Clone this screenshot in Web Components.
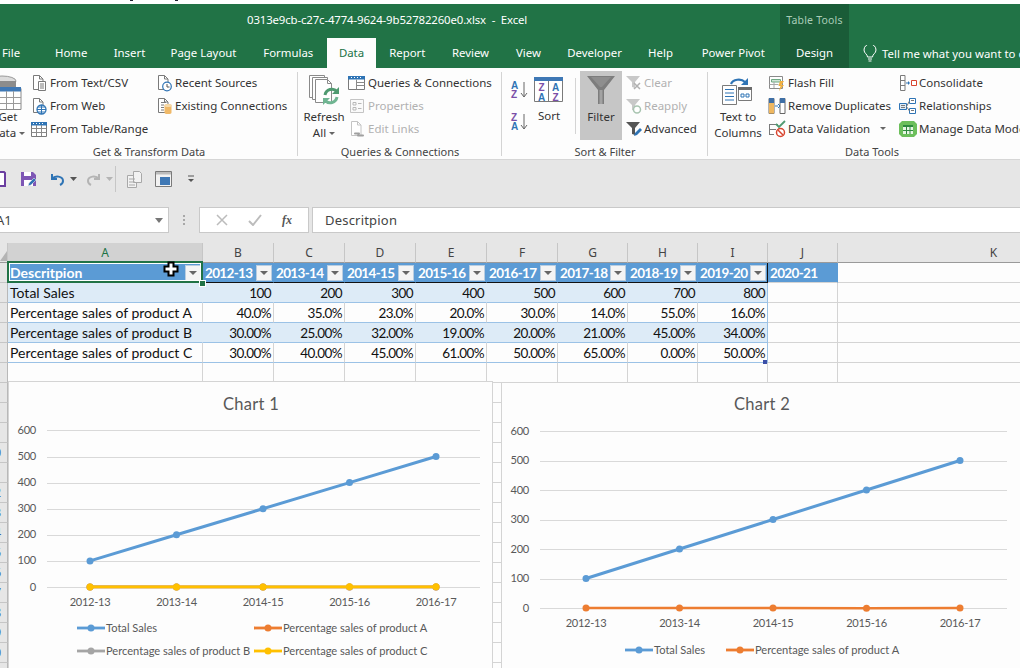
<!DOCTYPE html>
<html>
<head>
<meta charset="utf-8">
<title>Excel</title>
<style>
  html, body { margin: 0; padding: 0; width: 1020px; height: 668px; overflow: hidden; background: #e6e6e6; }
  body { display: flex; flex-direction: column; font-family: 'Noto Sans', sans-serif; }
</style>
</head>
<body>
<xl-titlebar></xl-titlebar>
<xl-ribbon></xl-ribbon>
<xl-qat></xl-qat>
<xl-formula></xl-formula>
<xl-sheet>
  <xl-chart config="one"></xl-chart>
  <xl-chart config="two"></xl-chart>
</xl-sheet>

<script>
const UI_FONT = "'Noto Sans', 'Open Sans', sans-serif";
const CELL_FONT = "Lato, 'Open Sans', sans-serif";

// doc outline used by most of the small ribbon icons
const docOutline = (c = '#7a7a7a') => `<path d="M3.5 1.5h6l3.5 3.5v10.500h-9.500z" fill="#fff" stroke="${c}"/><path d="M9.500 1.500v3.500h3.500" fill="none" stroke="${c}"/>`;
const svg = (w, h, body) => `<svg width="${w}" height="${h}" viewBox="0 0 ${w} ${h}" xmlns="http://www.w3.org/2000/svg">${body}</svg>`;

const ICONS = {
  csv: svg(18, 18, docOutline() + '<path d="M8.500 7.500h7v9h-7z" fill="#fff" stroke="#7a7a7a"/><path d="M10 10h4M10 12h4M10 14h4" stroke="#7a7a7a"/>'),
  web: svg(18, 18, docOutline() + '<circle cx="11.500" cy="12.500" r="4.500" fill="#fff" stroke="#2f74b5" stroke-width="1.300"/><path d="M7 12.500h9M11.500 8v9M8 10h7M8 15h7" stroke="#2f74b5"/>'),
  table: svg(18, 18, '<path d="M1.500 3.500h15v13h-15z" fill="#fff" stroke="#7a7a7a"/><path d="M1 2h16v3.500H1z" fill="#2f74b5"/><path d="M3 3.500h1M6 3.500h1M9 3.500h1M12 3.500h1" stroke="#fff"/><path d="M1.500 8.500h15M1.500 12.500h15M6.500 5v11M11.500 5v11" stroke="#8a8a8a"/>'),
  recent: svg(18, 18, docOutline() + '<circle cx="12" cy="12.500" r="4.300" fill="#fff" stroke="#2f74b5" stroke-width="1.200"/><path d="M12 10v3h2.500" fill="none" stroke="#555"/>'),
  existing: svg(18, 18, docOutline() + '<path d="M6 5.500h5M6 8h3M6 10.500h3M6 13h3" stroke="#7a7a7a"/><path d="M9.500 8.500a3.500 1.500 0 0 1 7 0v7a3.500 1.500 0 0 1-7 0z" fill="#f0b968"/><ellipse cx="13" cy="8.500" rx="3.500" ry="1.500" fill="#f6d9a8"/>'),
  queries: svg(18, 18, '<path d="M.5 3.500h16v12H.5z" fill="#fff" stroke="#7a7a7a"/><path d="M0 2h17v3.500H0z" fill="#2f74b5"/><path d="M3 3.500h1M6 3.500h1M9 3.500h1M12 3.500h1" stroke="#fff"/><path d="M8.500 5.500v10M8.500 8.500h8M8.500 11.500h8" stroke="#8a8a8a"/>'),
  props: svg(18, 18, '<path d="M2.500 2.500h13v13h-13z" fill="#fafafa" stroke="#c4c4c4"/><path d="M5 5.500h3v2.500H5zM5 10.500h3V13H5z" fill="none" stroke="#b8b8b8"/><path d="M10 6.500h3.500M10 11.500h3.500" stroke="#b8b8b8"/>'),
  links: svg(18, 18, docOutline('#c4c4c4') + '<path d="M7 13.500h4M10 15.500h5" stroke="#a0a0a0" stroke-width="2" stroke-linecap="round"/>'),
  clear: svg(18, 18, '<path d="M1 2h14l-5 6v6l-3-1V8z" fill="#c8c8c8"/><path d="M9 9l6 6M15 9l-6 6" stroke="#b0b0b0" stroke-width="1.500"/>'),
  reapply: svg(18, 18, '<path d="M1 2h14l-5 6v6l-3-1V8z" fill="#c8c8c8"/><circle cx="12" cy="12.500" r="3.500" fill="#fff" stroke="#a8c4b0" stroke-width="1.500"/>'),
  advanced: svg(18, 18, '<path d="M1 2h14l-5 6v7l-3-1V8z" fill="#555"/><path d="M9 16l1-3 5-5 2 2-5 5z" fill="#2f74b5"/>'),
  flash: svg(18, 18, '<path d="M1.500 2.500h13v12h-13z" fill="#fff" stroke="#8a8a8a"/><path d="M3.500 5.500h9v2.500h-9z" fill="#cfe5d6" stroke="#6fa883"/><path d="M1.500 10.500h9M6 8v6" stroke="#a8a8a8"/><path d="M12 7h4l-2.500 4h2.500l-5 6 1.500-5h-2z" fill="#f0b040"/>'),
  dupes: svg(18, 18, '<path d="M1 1.500h5v15H1zM12 1.500h5v15h-5z" fill="#fff" stroke="#666"/><path d="M1 1h5v5H1zM12 1h5v5h-5z" fill="#3f6fa5"/><path d="M1 6h5v5H1z" fill="#efb75f"/><path d="M1 11h5v5.500H1z" fill="#efb75f"/><path d="M7 9h3M10 7l2 2-2 2" fill="none" stroke="#2f74b5"/>'),
  validate: svg(18, 18, '<path d="M1 4.500h9M1 9.500h7M1 14.500h5M1.500 4.500v10" stroke="#7a7a7a" fill="none"/><path d="M8 4l3 3 6-6" fill="none" stroke="#4f9a70" stroke-width="1.800"/><circle cx="12.500" cy="12.500" r="4" fill="#fff" stroke="#d8452f" stroke-width="1.500"/><path d="M10 10l5 5" stroke="#d8452f" stroke-width="1.500"/>'),
  consolidate: svg(18, 18, '<path d="M1.500 1.500h4.500v15H1.500z" fill="#fff" stroke="#7a7a7a"/><path d="M1.500 6.500h4.500M1.500 11.500h4.500" stroke="#7a7a7a"/><path d="M7 9h2.500" stroke="#2f74b5"/><path d="M9 7l2 2-2 2z" fill="#2f74b5"/><path d="M12.500 6.500h5v5h-5z" fill="#fff" stroke="#d8452f"/>'),
  relations: svg(18, 18, '<path d="M.5 6.500h7v6h-7z" fill="#dfeaf5" stroke="#2f74b5"/><path d="M10.500 1.500h6v5h-6zM10.500 11.500h6v5h-6z" fill="#fff" stroke="#2f74b5"/><path d="M2 8.500h4M2 10.500h4M12 3.500h3M12 13.500h3" stroke="#7a7a7a"/><path d="M7.500 9.500l3-5.500M7.500 9.500l3 4.500" stroke="#7a7a7a"/>'),
  model: svg(18, 18, '<path d="M3 1h12l3 3v10l-3 3H3l-3-3V4z" fill="#6cbf5b"/><path d="M4 5h10v9H4z" fill="#e8f6e4"/><path d="M4 5h10v2H4z" fill="#2f8a3f"/><path d="M7.500 7v7M11 7v7M4 10.500h10" stroke="#2f8a3f"/>')
};

const BIG_ICONS = {
  get: svg(52, 36, '<ellipse cx="20" cy="7" rx="14" ry="5" fill="#dcdcdc" stroke="#9a9a9a"/><path d="M6 7v22h28V7" fill="#8c8c8c"/><path d="M10 1l5 3" stroke="#e9a93c" stroke-width="2"/><path d="M17 14.500h22v21H17z" fill="#fff" stroke="#8a8a8a"/><path d="M17 13h22v4.500H17z" fill="#3f78b5"/><path d="M17 23.500h22M17 29.500h22M24.500 17v18M31.500 17v18" stroke="#9a9a9a"/>'),
  refresh: svg(32, 32, '<path d="M1.500 1.500h15v22h-15z" fill="#fff" stroke="#8a8a8a"/><path d="M4.500 3.500h15v22h-15z" fill="#fff" stroke="#8a8a8a"/><path d="M7.500 5.500h12l4 4v19h-16z" fill="#fff" stroke="#8a8a8a"/><path d="M19.500 5.500v4h4" fill="none" stroke="#8a8a8a"/><path d="M17 21a7 7 0 0 1 12-3.500" fill="none" stroke="#4f9a70" stroke-width="3"/><path d="M31 13v7h-7z" fill="#4f9a70"/><path d="M29 23a7 7 0 0 1-12 3.500" fill="none" stroke="#70b592" stroke-width="3"/><path d="M15 31v-7h7z" fill="#70b592"/>'),
  sort: svg(30, 26, '<path d="M.5 1.500h28v23H.5z" fill="#fff" stroke="#7a7a7a"/><path d="M0 0h29v4H0z" fill="#3f78b5"/><path d="M14.500 4v20" stroke="#7a7a7a"/><text x="7.500" y="14" text-anchor="middle" font-family="Liberation Sans" font-size="10" font-weight="700" fill="#7b4fa8">Z</text><text x="7.500" y="23.500" text-anchor="middle" font-family="Liberation Sans" font-size="10" font-weight="700" fill="#2f74b5">A</text><text x="21.500" y="14" text-anchor="middle" font-family="Liberation Sans" font-size="10" font-weight="700" fill="#2f74b5">A</text><text x="21.500" y="23.500" text-anchor="middle" font-family="Liberation Sans" font-size="10" font-weight="700" fill="#7b4fa8">Z</text>'),
  filter: svg(28, 28, '<path d="M0 0h28L17 14v14h-6V14z" fill="#7d7d7d"/><path d="M4 1h20l-9 10h-2z" fill="#8e8e8e"/><path d="M12.500 14h3v14h-3z" fill="#a2a2a2"/>'),
  columns: svg(32, 30, '<path d="M9 9a8 6 0 0 1 14-2" fill="none" stroke="#2f74b5" stroke-width="2.200"/><path d="M26 3v7h-7z" fill="#2f74b5"/><path d="M.5 10.500h14l0 19h-14z" fill="#fff" stroke="#7a7a7a"/><path d="M3 14.500h9M3 18h9M3 21.500h9M3 25h9" stroke="#2f74b5"/><path d="M16.500 12.500h13v13h-13z" fill="#fff" stroke="#7a7a7a"/><path d="M16 12h14v3H16z" fill="#6a6a6a"/><path d="M19 19h3v3h-3zM24 19h3v3h-3z" fill="none" stroke="#2f74b5"/>')
};

// ---- title bar + tabs ----
const titlebarTemplate = document.createElement('template');
titlebarTemplate.innerHTML = /*html*/ `
  <style>
    :host { display: block; flex: none; color: #fff; font: 11.400px ${UI_FONT}; }
    .strip { height: 4px; background: #fff; display: flex; }
    .strip i { height: 1px; width: 3px; background: #223; }
    .strip i:first-child { margin-left: 130px; margin-right: 42px; }
    .bar { display: grid; grid-template-columns: 780px 69px 1fr; grid-template-rows: 34px 30px; background: #217346; }
    .file { padding-left: 247px; line-height: 32px; white-space: pre; letter-spacing: -.13px; }
    .ctx { background: #1a5c38; text-align: center; line-height: 32px; color: #a9cdb8; font-size: 10.500px; letter-spacing: .2px; }
    .tabs { grid-row: 2; display: flex; align-items: stretch; }
    .tab { text-align: center; line-height: 30px; white-space: nowrap; }
    .tab.on { background: #fdfdfd; color: #217346; }
    .design { grid-row: 2; background: #1a5c38; text-align: center; line-height: 30px; }
    .tell { grid-row: 2; display: flex; align-items: center; gap: 5px; padding-left: 14px; white-space: nowrap; overflow: hidden; }
    .tell svg { flex: none; }
  </style>
  <div class="strip"><i></i><i></i></div>
  <div class="bar">
    <div class="file">0313e9cb-c27c-4774-9624-9b52782260e0.xlsx  -  Excel</div>
    <div class="ctx">Table Tools</div>
    <div></div>
    <div class="tabs"></div>
    <div class="design">Design</div>
    <div class="tell">
      <svg width="14" height="17" viewBox="0 0 14 17"><path d="M4.500 12c0-3-3.500-3.500-3.500-7a6 6 0 0 1 12 0c0 3.500-3.500 4-3.500 7zM5 14h4M5.500 16h3" fill="none" stroke="#fff"/></svg>
      <span>Tell me what you want to do</span>
    </div>
  </div>
`;
class XlTitlebar extends HTMLElement {
  connectedCallback() {
    this.attachShadow({ mode: 'open' });
    this.shadowRoot.appendChild(titlebarTemplate.content.cloneNode(true));
    const tabs = [['File', 22], ['', 19], ['Home', 60.500], ['Insert', 56], ['Page Layout', 92], ['Formulas', 77.500], ['Data', 49], ['Report', 62.500], ['Review', 64], ['View', 52], ['Developer', 80], ['Help', 52], ['Power Pivot', 93.500]];
    const host = this.shadowRoot.querySelector('.tabs');
    tabs.forEach(([name, w]) => {
      const t = document.createElement('div');
      t.className = name === 'Data' ? 'tab on' : 'tab';
      t.style.width = w + 'px';
      t.textContent = name;
      host.appendChild(t);
    });
  }
}
customElements.define('xl-titlebar', XlTitlebar);

// ---- ribbon parts ----
class RbGroup extends HTMLElement {
  connectedCallback() {
    this.attachShadow({ mode: 'open' });
    this.shadowRoot.innerHTML = /*html*/ `
      <style>
        :host { display: flex; flex-direction: column; flex: none; height: 92px; width: ${this.getAttribute('w')}px; box-sizing: border-box; overflow: hidden; }
        .body { flex: 1; display: flex; padding-top: 3px; padding-left: ${this.getAttribute('pad') || 0}px; min-height: 0; }
        .label { height: 17px; line-height: 18px; text-align: center; color: #444; font-size: 11px; white-space: nowrap; }
      </style>
      <div class="body"><slot></slot></div>
      <div class="label">${this.getAttribute('label')}</div>
    `;
  }
}
customElements.define('rb-group', RbGroup);

class RbSep extends HTMLElement {
  connectedCallback() {
    this.attachShadow({ mode: 'open' });
    this.shadowRoot.innerHTML = `<style>:host { display: block; flex: none; width: 1px; height: 84px; margin-top: 4px; background: #d4d4d4; }</style>`;
  }
}
customElements.define('rb-sep', RbSep);

// stack of up to three small buttons
class RbCol extends HTMLElement {
  connectedCallback() {
    this.attachShadow({ mode: 'open' });
    this.shadowRoot.innerHTML = `<style>:host { display: flex; flex-direction: column; flex: none; width: ${this.getAttribute('w')}px; }</style><slot></slot>`;
  }
}
customElements.define('rb-col', RbCol);

class RbSmall extends HTMLElement {
  connectedCallback() {
    const off = this.hasAttribute('off');
    const caret = this.getAttribute('caret');
    this.attachShadow({ mode: 'open' });
    this.shadowRoot.innerHTML = /*html*/ `
      <style>
        :host { display: flex; align-items: center; height: 23px; flex: none; white-space: nowrap; color: ${off ? '#b1b1b1' : '#333'}; font-size: 11.500px; }
        .ic { width: ${this.getAttribute('ic') || 20}px; flex: none; display: flex; }
        .caret { width: 0; height: 0; margin-left: ${caret}px; border: 3px solid transparent; border-top: 3px solid #666; border-bottom: 0; }
      </style>
      <span class="ic">${ICONS[this.getAttribute('icon')] || ''}</span>
      <span>${this.getAttribute('label')}</span>
      ${caret ? '<i class="caret"></i>' : ''}
    `;
  }
}
customElements.define('rb-small', RbSmall);

class RbBig extends HTMLElement {
  connectedCallback() {
    const lines = this.getAttribute('label').split('|');
    this.attachShadow({ mode: 'open' });
    this.shadowRoot.innerHTML = /*html*/ `
      <style>
        :host { display: flex; flex-direction: column; align-items: center; flex: none; width: ${this.getAttribute('w')}px; height: 69px; box-sizing: border-box; padding-top: ${this.getAttribute('top') || 3}px; color: #333; font-size: 11.500px; white-space: nowrap; }
        :host([pressed]) { background: #c6c6c6; }
        .ic { height: ${this.getAttribute('ih') || 35}px; display: flex; align-items: flex-start; flex: none; }
        .t { line-height: 16px; height: 16px; display: flex; align-items: center; gap: 3px; }
        .caret { width: 0; height: 0; border: 3px solid transparent; border-top: 3px solid #666; border-bottom: 0; }
      </style>
      <div class="ic">${BIG_ICONS[this.getAttribute('icon')]}</div>
      ${lines.map((l) => `<div class="t">${l.replace('^', '<i class="caret"></i>')}</div>`).join('')}
    `;
  }
}
customElements.define('rb-big', RbBig);

const ribbonTemplate = document.createElement('template');
ribbonTemplate.innerHTML = /*html*/ `
  <style>
    :host { display: flex; flex: none; height: 92px; background: #fdfdfd; border-bottom: 1px solid #d6d6d6; box-sizing: border-box; font-family: ${UI_FONT}; overflow: hidden; width: 1020px; }
    .az { display: flex; flex-direction: column; justify-content: space-between; width: 16px; height: 50px; padding: 10px 0 0 9px; flex: none; }
    .az span { display: block; height: 18px; position: relative; font: 700 10px/9px 'Liberation Sans', sans-serif; width: 16px; }
    .az b { display: block; }
    .az svg { position: absolute; left: 9px; top: 0; }
    .tall { width: 1px; height: 56px; background: #d4d4d4; flex: none; margin: 7px 4px 0 0; }
  </style>
  <rb-group w="298" label="Get &amp; Transform Data" pad="0">
    <rb-big w="44" icon="get" label="Get|Data ^" style="margin-left:-14px"></rb-big>
    <rb-col w="125">
      <rb-small icon="csv" label="From Text/CSV"></rb-small>
      <rb-small icon="web" label="From Web"></rb-small>
      <rb-small icon="table" label="From Table/Range"></rb-small>
    </rb-col>
    <rb-col w="130">
      <rb-small icon="recent" label="Recent Sources"></rb-small>
      <rb-small icon="existing" label="Existing Connections"></rb-small>
    </rb-col>
  </rb-group>
  <rb-group w="204" label="Queries &amp; Connections" pad="2">
    <rb-big w="48" icon="refresh" label="Refresh|All ^"></rb-big>
    <rb-col w="150">
      <rb-small icon="queries" label="Queries &amp; Connections"></rb-small>
      <rb-small icon="props" label="Properties" off></rb-small>
      <rb-small icon="links" label="Edit Links" off></rb-small>
    </rb-col>
  </rb-group>
  <rb-group w="206" label="Sort &amp; Filter" pad="0">
    <div class="az">
      <span><b style="color:#2f74b5">A</b><b style="color:#7b4fa8">Z</b><svg width="8" height="18"><path d="M4 1v15M1 12l3 4 3-4" fill="none" stroke="#666"/></svg></span>
      <span><b style="color:#7b4fa8">Z</b><b style="color:#2f74b5">A</b><svg width="8" height="18"><path d="M4 1v15M1 12l3 4 3-4" fill="none" stroke="#666"/></svg></span>
    </div>
    <rb-big w="44" icon="sort" label="Sort" top="6" ih="31"></rb-big>
    <div style="width:4px"></div>
    <div class="tall"></div>
    <rb-big w="42" icon="filter" label="Filter" pressed top="5" ih="33"></rb-big>
    <rb-col w="80" style="margin-left:3px">
      <rb-small icon="clear" label="Clear" off ic="19"></rb-small>
      <rb-small icon="reapply" label="Reapply" off ic="19"></rb-small>
      <rb-small icon="advanced" label="Advanced" ic="19"></rb-small>
    </rb-col>
  </rb-group>
  <rb-group w="328" label="Data Tools" pad="0">
    <rb-big w="60" icon="columns" label="Text to|Columns" top="4" ih="34"></rb-big>
    <rb-col w="131">
      <rb-small icon="flash" label="Flash Fill"></rb-small>
      <rb-small icon="dupes" label="Remove Duplicates"></rb-small>
      <rb-small icon="validate" label="Data Validation" caret="10"></rb-small>
    </rb-col>
    <rb-col w="125">
      <rb-small icon="consolidate" label="Consolidate"></rb-small>
      <rb-small icon="relations" label="Relationships"></rb-small>
      <rb-small icon="model" label="Manage Data Model"></rb-small>
    </rb-col>
  </rb-group>
`;
class XlRibbon extends HTMLElement {
  connectedCallback() {
    this.attachShadow({ mode: 'open' });
    this.shadowRoot.appendChild(ribbonTemplate.content.cloneNode(true));
    // separators sit on the right edge of each group, they overlap the group box
    this.shadowRoot.querySelectorAll('rb-group').forEach((g) => {
      if (g.getAttribute('label') === 'Data Tools') return;
      const line = document.createElement('rb-sep');
      line.style.marginLeft = '-1px';
      g.after(line);
    });
  }
}
customElements.define('xl-ribbon', XlRibbon);

// ---- quick access toolbar ----
const qatTemplate = document.createElement('template');
qatTemplate.innerHTML = /*html*/ `
  <style>
    :host { display: flex; align-items: center; flex: none; height: 39px; padding-bottom: 2px; box-sizing: border-box; background: #e6e6e6; }
    svg { display: block; flex: none; }
  </style>
  <svg width="6" height="16" style="margin-right:14px"><path d="M-8 1h12l1 1v13H-8z" fill="#fff" stroke="#6b3fa0" stroke-width="2"/></svg>
  <svg width="17" height="16" style="margin-right:12px"><path d="M1 1h12l3 3v11H1z" fill="#7e57b5"/><path d="M4 1h7v4H4z" fill="#fff"/><path d="M4 9h9v6H4z" fill="#fff"/><path d="M8 15l1-3 5-5 2 2-5 5z" fill="#2f74b5" stroke="#e6e6e6" stroke-width=".6"/></svg>
  <svg width="17" height="14" style="margin-right:4px"><path d="M3 2v5h5" fill="none" stroke="#2f74b5" stroke-width="2"/><path d="M3 7c3-4 11-3 11 2 0 2-1 3-3 4" fill="none" stroke="#2f74b5" stroke-width="2"/></svg>
  <svg width="7" height="4" style="margin-right:8px"><path d="M0 0h7L3.500 4z" fill="#555"/></svg>
  <svg width="17" height="14" style="margin-right:4px"><path d="M14 2v5H9" fill="none" stroke="#b4b4b4" stroke-width="2"/><path d="M14 7C11 3 3 4 3 9c0 2 1 3 3 4" fill="none" stroke="#b4b4b4" stroke-width="2"/></svg>
  <svg width="7" height="4" style="margin-right:2px"><path d="M0 0h7L3.500 4z" fill="#b4b4b4"/></svg>
  <svg width="1" height="26" style="margin-right:10px"><path d="M0 0h1v26H0z" fill="#c6c6c6"/></svg>
  <svg width="17" height="18" style="margin-right:12px"><path d="M1.500 5.500h9v12h-9z" fill="#f2f2f2" stroke="#a8a8a8"/><path d="M7.500 1.500h6l2 2v9h-8z" fill="#f2f2f2" stroke="#a8a8a8"/><path d="M3 9h6M3 12h6M3 15h6" stroke="#a8a8a8"/></svg>
  <svg width="17" height="16" style="margin-right:16px"><path d="M.5.5h16v15H.5z" fill="#f2f2f2" stroke="#7a7a7a"/><path d="M1 1h15v2.500H1z" fill="#bcbcbc"/><path d="M5 6h10v8H5z" fill="#3f78b5"/></svg>
  <svg width="6" height="8"><path d="M0 1h6" stroke="#555"/><path d="M0 4h6L3 7z" fill="#555"/></svg>
`;
class XlQat extends HTMLElement {
  connectedCallback() {
    this.attachShadow({ mode: 'open' });
    this.shadowRoot.appendChild(qatTemplate.content.cloneNode(true));
  }
}
customElements.define('xl-qat', XlQat);

// ---- formula bar ----
const formulaTemplate = document.createElement('template');
formulaTemplate.innerHTML = /*html*/ `
  <style>
    :host { display: flex; flex: none; height: 44px; padding-top: 8px; box-sizing: border-box; background: #e6e6e6; font: 13px ${UI_FONT}; color: #444; }
    .box { height: 26px; box-sizing: border-box; background: #fff; border: 1px solid #c9c9c9; display: flex; align-items: center; flex: none; }
    .name { width: 170px; margin-left: -1px; padding: 0 0 0 1px; justify-content: space-between; overflow: hidden; border-left: 0; }
    .name span { margin-left: -4px; font-size: 13px; }
    .caret { width: 0; height: 0; margin-right: 5px; border: 4px solid transparent; border-top: 5px solid #777; border-bottom: 0; }
    .dots { width: 30px; flex: none; display: flex; flex-direction: column; align-items: center; justify-content: center; gap: 2px; height: 26px; }
    .dots i { width: 2px; height: 2px; background: #a8a8a8; }
    .fx { width: 110px; justify-content: space-around; padding: 0 6px; }
    .input { flex: 1; margin-left: 3px; padding-left: 12px; letter-spacing: .2px; border-right: 0; }
  </style>
  <div class="box name"><span>A1</span><i class="caret"></i></div>
  <div class="dots"><i></i><i></i><i></i></div>
  <div class="box fx">
    <svg width="12" height="12"><path d="M1 1l10 10M11 1L1 11" stroke="#bcbcbc" stroke-width="1.500"/></svg>
    <svg width="14" height="12"><path d="M1 7l4 4 8-10" fill="none" stroke="#bcbcbc" stroke-width="2"/></svg>
    <span style="font:italic 700 12px 'Liberation Serif',serif;color:#555">fx</span>
  </div>
  <div class="box input">Descritpion</div>
`;
class XlFormula extends HTMLElement {
  connectedCallback() {
    this.attachShadow({ mode: 'open' });
    this.shadowRoot.appendChild(formulaTemplate.content.cloneNode(true));
  }
}
customElements.define('xl-formula', XlFormula);

// ---- worksheet ----
const sheetTemplate = document.createElement('template');
sheetTemplate.innerHTML = /*html*/ `
  <style>
    :host { display: block; position: relative; flex: 1; min-height: 0; overflow: hidden; background: #fdfdfd; font: 14px ${CELL_FONT}; color: #111; }
    .grid { display: grid; width: 1150px; grid-template-columns: 8px 195px repeat(5, 71px) repeat(4, 70px) 312px; grid-auto-rows: 20px; }
    .c { box-sizing: border-box; border-right: 1px solid #d4d4d4; border-bottom: 1px solid #d4d4d4; white-space: nowrap; overflow: hidden; line-height: 19px; padding: 0 2px; }
    .h { background: #e6e6e6; color: #444; text-align: center; border-right-color: #c6c6c6; border-bottom-color: #9a9a9a; font: 12px/20px ${UI_FONT}; padding: 0; }
    .h.on { background: #d2d2d2; color: #217346; }
    .rh { background: #e6e6e6; border-right-color: #b8b8b8; border-bottom-color: #c6c6c6; padding: 0; display: flex; justify-content: flex-end; font: 12px/20px ${UI_FONT}; }
    .rh span { margin-right: 6px; flex: none; color: #3a5fa8; }
    .corner { background: #e6e6e6; border-right-color: #c6c6c6; border-bottom-color: #9a9a9a; padding: 0; }
    .corner svg { display: block; margin-top: 8px; }
    .hd { background: #5b9bd5; color: #fff; font-weight: 700; display: flex; align-items: center; justify-content: space-between; border-color: #5b9bd5; border-bottom-color: #111; padding: 0 1px 0 2px; }
    .hd.last { border-right-color: #111; }
    .hd.free { border-bottom-color: #d4d4d4; border-right-color: #5b9bd5; }
    .yr { font-size: 13.500px; letter-spacing: -.65px; padding-top: 1px; }
    .band { background: #ddebf7; border-right-color: #ddebf7; }
    .row { border-bottom-color: #9bc2e6; }
    .num { text-align: right; font-size: 13.500px; letter-spacing: -.6px; line-height: 20px; }
    .edge { border-right-color: #9bc2e6; }
    .btn { flex: none; width: 16px; height: 16px; box-sizing: border-box; background: #f4f4f4; border: 1px solid #b9cde0; display: flex; align-items: center; justify-content: center; }
    .btn i { width: 0; height: 0; border: 4px solid transparent; border-top: 4px solid #666; border-bottom: 0; }
    .sel { position: absolute; left: 7px; top: 18px; width: 196px; height: 22px; box-sizing: border-box; border: 2px solid #217346; box-shadow: inset 0 0 0 1px #fff; pointer-events: none; }
    .handle { position: absolute; left: 199px; top: 37px; width: 7px; height: 7px; box-sizing: border-box; background: #217346; border: 1px solid #fff; }
    .resize { position: absolute; left: 763px; top: 117px; width: 4px; height: 4px; background: #3b4fa8; }
    .cross { position: absolute; left: 163px; top: 18px; }
    ::slotted(xl-chart) { position: absolute; }
  </style>
  <div class="grid"></div>
  <div class="sel"></div>
  <div class="handle"></div>
  <div class="resize"></div>
  <svg class="cross" width="16" height="16" viewBox="0 0 16 16"><path d="M5.500 1.500h5v4h4v5h-4v4h-5v-4h-4v-5h4z" fill="#fff" stroke="#000" stroke-width="2"/></svg>
  <slot></slot>
`;

const SHEET_ROWS = [
  ['Total Sales', '100', '200', '300', '400', '500', '600', '700', '800'],
  ['Percentage sales of product A', '40.0%', '35.0%', '23.0%', '20.0%', '30.0%', '14.0%', '55.0%', '16.0%'],
  ['Percentage sales of product B', '30.00%', '25.00%', '32.00%', '19.00%', '20.00%', '21.00%', '45.00%', '34.00%'],
  ['Percentage sales of product C', '30.00%', '40.00%', '45.00%', '61.00%', '50.00%', '65.00%', '0.00%', '50.00%']
];
const SHEET_HEAD = ['Descritpion', '2012-13', '2013-14', '2014-15', '2015-16', '2016-17', '2017-18', '2018-19', '2019-20'];

class XlSheet extends HTMLElement {
  connectedCallback() {
    this.attachShadow({ mode: 'open' });
    this.shadowRoot.appendChild(sheetTemplate.content.cloneNode(true));
    const grid = this.shadowRoot.querySelector('.grid');
    const add = (cls, html) => {
      const c = document.createElement('div');
      c.className = 'c ' + cls;
      c.innerHTML = html;
      grid.appendChild(c);
    };
    // column letters
    add('corner', '<svg width="7" height="10"><path d="M7 0v10H0z" fill="#b4b4b4"/></svg>');
    'ABCDEFGHIJK'.split('').forEach((l) => add(l === 'A' ? 'h on' : 'h', l));
    // row number column only shows the clipped end of two digit numbers
    const rowHead = (n) => add('rh', n >= 10 ? `<span>${n}</span>` : '');
    rowHead(1);
    SHEET_HEAD.forEach((t, i) => add(i === 8 ? 'hd last' : 'hd', `<span class="${i ? 'yr' : ''}">${t}</span><span class="btn"><i></i></span>`));
    add('hd free', '<span class="yr">2020-21</span>');
    add('', '');
    SHEET_ROWS.forEach((r, ri) => {
      rowHead(ri + 2);
      r.forEach((v, i) => {
        const band = ri % 2 === 0 ? ' band' : '';
        const cls = 'row' + band + (i > 0 ? ' num' : '') + (i === 8 ? ' edge' : '');
        add(cls, v);
      });
      add('', '');
      add('', '');
    });
    for (let n = 6; n <= 21; n++) {
      rowHead(n);
      for (let i = 0; i < 11; i++) add('', '');
    }
  }
}
customElements.define('xl-sheet', XlSheet);

// ---- charts ----
const CATS = ['2012-13', '2013-14', '2014-15', '2015-16', '2016-17'];
const TOTAL = { name: 'Total Sales', color: '#5b9bd5', vals: [100, 200, 300, 400, 500] };
const PROD_A = { name: 'Percentage sales of product A', color: '#ed7d31', vals: [0.4, 0.35, 0.23, 0.2, 0.3] };
const CHARTS = {
  one: {
    title: 'Chart 1', left: 8, top: 138, w: 485, h: 287,
    titleX: 242, titleY: 28, gridL: 38, gridR: 471, zero: 205, step: 26.100, firstX: 81, stepX: 86.500, catY: 224,
    series: [TOTAL, PROD_A,
      { name: 'Percentage sales of product B', color: '#a5a5a5', vals: [0.3, 0.25, 0.32, 0.19, 0.2] },
      { name: 'Percentage sales of product C', color: '#ffc000', vals: [0.3, 0.4, 0.45, 0.61, 0.5] }],
    legend: [[68, 246], [245, 246], [68, 269], [245, 269]]
  },
  two: {
    title: 'Chart 2', left: 501, top: 139, w: 530, h: 287,
    titleX: 260, titleY: 27, gridL: 38, gridR: 505, zero: 225, step: 29.500, firstX: 84, stepX: 93.500, catY: 244,
    series: [TOTAL, { name: PROD_A.name, color: '#ed7d31', vals: [0, 0, 0, -0.8, 0] }],
    legend: [[123, 267], [224, 267]]
  }
};

class XlChart extends HTMLElement {
  connectedCallback() {
    const c = CHARTS[this.getAttribute('config')];
    this.style.left = c.left + 'px';
    this.style.top = c.top + 'px';
    const yOf = (v) => c.zero - (v / 100) * c.step;
    const xOf = (i) => c.firstX + i * c.stepX;
    let body = `<text class="title" x="${c.titleX}" y="${c.titleY}" text-anchor="middle">${c.title}</text>`;
    for (let v = 0; v <= 600; v += 100) {
      const y = yOf(v);
      body += `<path d="M${c.gridL} ${Math.round(y) + 0.5}H${c.gridR}" stroke="#d9d9d9"/>`;
      body += `<text class="n" x="${c.gridL - 11}" y="${y + 3.500}" text-anchor="end">${v}</text>`;
    }
    CATS.forEach((n, i) => {
      body += `<text class="n" x="${xOf(i)}" y="${c.catY}" text-anchor="middle">${n}</text>`;
    });
    c.series.forEach((s, k) => {
      const pts = s.vals.map((v, i) => `${xOf(i)},${yOf(v)}`).join(' ');
      body += `<polyline points="${pts}" fill="none" stroke="${s.color}" stroke-width="${k === 0 ? 3 : 2.600}" stroke-linecap="round"/>`;
      s.vals.forEach((v, i) => { body += `<circle cx="${xOf(i)}" cy="${yOf(v)}" r="3.500" fill="${s.color}"/>`; });
      const [lx, ly] = c.legend[k];
      body += `<path d="M${lx} ${ly}h28" stroke="${s.color}" stroke-width="2.800"/><circle cx="${lx + 14}" cy="${ly}" r="3.500" fill="${s.color}"/>`;
      body += `<text x="${lx + 29}" y="${ly + 3.500}">${s.name}</text>`;
    });
    this.attachShadow({ mode: 'open' });
    this.shadowRoot.innerHTML = /*html*/ `
      <style>
        :host { display: block; width: ${c.w}px; height: ${c.h}px; box-sizing: border-box; background: #fdfdfd; border-left: 1px solid #d4d4d4; border-top: 1px solid #d4d4d4; border-right: 1px solid #d4d4d4; }
        svg { display: block; }
        text { font: 11.100px ${CELL_FONT}; fill: #595959; }
        .n { letter-spacing: -.3px; }
        .title { font-size: 16.500px; letter-spacing: .3px; }
      </style>
      <svg width="${c.w}" height="${c.h}">${body}</svg>
    `;
  }
}
customElements.define('xl-chart', XlChart);
</script>
</body>
</html>
